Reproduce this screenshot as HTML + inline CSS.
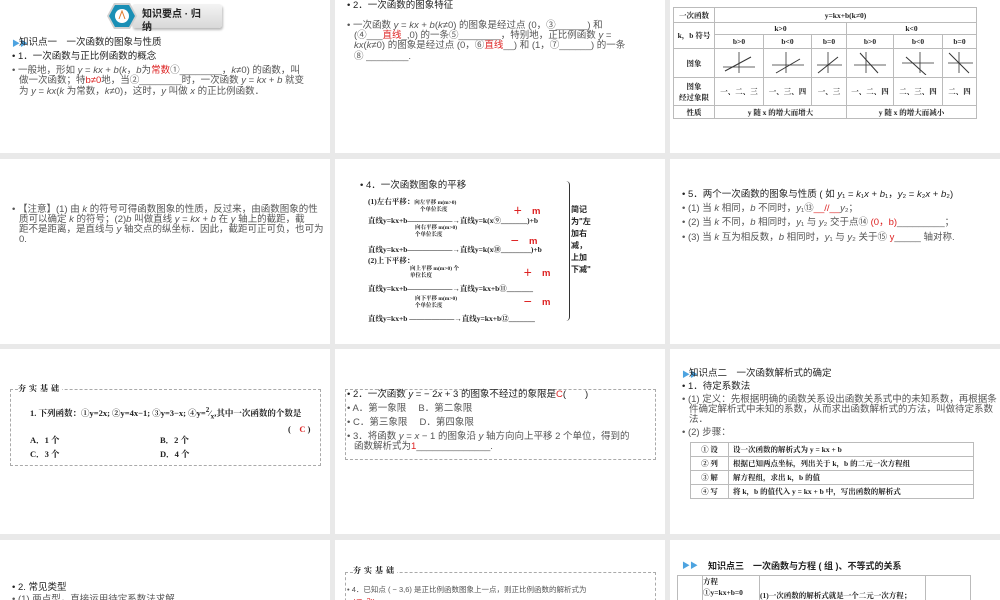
<!DOCTYPE html>
<html><head><meta charset="utf-8"><style>
*{margin:0;padding:0;box-sizing:border-box}
body{width:1000px;height:600px;background:#e9e9e9;position:relative;overflow:hidden;font-family:"Liberation Sans","Noto Sans CJK SC",sans-serif;color:#222}
.s{position:absolute;background:#fff;overflow:hidden;width:330px}
.a{position:absolute;white-space:nowrap;font-size:9.5px;line-height:10px}
.g{color:#555}
.r{color:#d22}
.b{font-weight:bold}
.se{font-family:"Liberation Serif","Noto Serif CJK SC",serif}
.dash{position:absolute;border:1px dashed #aaa}
table{border-collapse:collapse}
td{border:1px solid #bbb;text-align:center;font-family:"Liberation Serif","Noto Serif CJK SC",serif;font-size:7.5px;font-weight:bold;padding:0}
</style></head><body>

<!-- Row 1 -->
<div class="s" style="left:0;top:0;height:153px">
  <div style="position:absolute;left:132px;top:4px;width:90px;height:24px;background:linear-gradient(#f4f4f4,#d8d8d8);border-radius:3px;box-shadow:1px 2px 2px #bbb"></div>
  <svg style="position:absolute;left:106px;top:1px" width="32" height="30"><polygon points="8,2 24,2 31,15 24,28 8,28 1,15" fill="#d0d0d0"/><polygon points="9,4 23,4 29,15 23,26 9,26 3,15" fill="#1a8fb5"/><circle cx="16" cy="15" r="7" fill="#fff"/><path d="M13 18 L16 10 L19 18" stroke="#e07a2b" fill="none"/></svg>
  <div class="a b" style="left:142px;top:9px;font-size:10px;line-height:12px">知识要点 · 归</div>
  <div class="a b" style="left:142px;top:22px;font-size:10px;line-height:12px">纳</div>
  <div class="a" style="left:12px;top:39px;color:#4da3e0;font-size:8px">▶▶</div>
  <div class="a" style="left:19px;top:38px">知识点一　一次函数的图象与性质</div>
  <div class="a" style="left:12px;top:52px">• 1．一次函数与正比例函数的概念</div>
  <div class="a g" style="left:12px;top:66px">• 一般地，形如 <i>y</i> = <i>kx</i> + <i>b</i>(<i>k</i>，<i>b</i>为<span class="r">常数</span>①________，<i>k</i>≠0) 的函数，叫</div>
  <div class="a g" style="left:19px;top:76px">做一次函数；特<span class="r">b≠0</span>地，当②________时，一次函数 <i>y</i> = <i>kx</i> + <i>b</i> 就变</div>
  <div class="a g" style="left:19px;top:87px">为 <i>y</i> = <i>kx</i>(<i>k</i> 为常数，<i>k</i>≠0)，这时，<i>y</i> 叫做 <i>x</i> 的正比例函数．</div>
</div>

<div class="s" style="left:335px;top:0;height:153px">
  <div class="a" style="left:12px;top:1px">• 2．一次函数的图象特征</div>
  <div class="a g" style="left:12px;top:21px">• 一次函数 <i>y</i> = <i>kx</i> + <i>b</i>(<i>k</i>≠0) 的图象是经过点 (0，③______) 和</div>
  <div class="a g" style="left:19px;top:31px">(④___<span class="r">直线</span>_,0) 的一条⑤________，特别地，正比例函数 <i>y</i> =</div>
  <div class="a g" style="left:19px;top:41px"><i>kx</i>(<i>k</i>≠0) 的图象是经过点 (0，⑥<span class="r">直线</span>__) 和 (1，⑦______) 的一条</div>
  <div class="a g" style="left:19px;top:52px">⑧ ________.</div>
</div>

<div class="s" style="left:670px;top:0;height:153px">
  <table style="position:absolute;left:3px;top:7px;width:304px">
    <tr style="height:15px"><td style="width:41px">一次函数</td><td colspan="6">y=kx+b(k≠0)</td></tr>
    <tr style="height:12px"><td rowspan="2">k，b 符号</td><td colspan="3">k&gt;0</td><td colspan="3">k&lt;0</td></tr>
    <tr style="height:14px"><td style="width:49px">b&gt;0</td><td style="width:48px">b&lt;0</td><td style="width:35px">b=0</td><td style="width:47px">b&gt;0</td><td style="width:49px">b&lt;0</td><td>b=0</td></tr>
    <tr style="height:29px"><td>图象</td>
      <td><svg width="40" height="26"><path d="M4 18H36M20 24V3" stroke="#333" stroke-width="0.8"/><path d="M6 22L32 8" stroke="#333"/></svg></td>
      <td><svg width="40" height="26"><path d="M4 16H36M18 24V3" stroke="#333" stroke-width="0.8"/><path d="M8 24L32 10" stroke="#333"/></svg></td>
      <td><svg width="30" height="26"><path d="M3 16H28M14 24V3" stroke="#333" stroke-width="0.8"/><path d="M4 24L24 8" stroke="#333"/></svg></td>
      <td><svg width="40" height="26"><path d="M4 16H36M16 24V3" stroke="#333" stroke-width="0.8"/><path d="M10 4L28 24" stroke="#333"/></svg></td>
      <td><svg width="40" height="26"><path d="M4 14H36M22 24V3" stroke="#333" stroke-width="0.8"/><path d="M8 8L28 26" stroke="#333"/></svg></td>
      <td><svg width="30" height="26"><path d="M3 14H28M14 24V3" stroke="#333" stroke-width="0.8"/><path d="M4 4L24 24" stroke="#333"/></svg></td></tr>
    <tr style="height:28px"><td>图象<br>经过象限</td><td>一、二、三</td><td>一、三、四</td><td>一、三</td><td>一、二、四</td><td>二、三、四</td><td>二、四</td></tr>
    <tr style="height:13px"><td>性质</td><td colspan="3">y 随 x 的增大而增大</td><td colspan="3">y 随 x 的增大而减小</td></tr>
  </table>
</div>

<!-- Row 2 -->
<div class="s" style="left:0;top:159px;height:185px">
  <div class="a g" style="left:12px;top:46px">• 【注意】(1) 由 <i>k</i> 的符号可得函数图象的性质，反过来，由函数图象的性</div>
  <div class="a g" style="left:19px;top:56px">质可以确定 <i>k</i> 的符号；(2)<i>b</i> 叫做直线 <i>y</i> = <i>kx</i> + <i>b</i> 在 <i>y</i> 轴上的截距，截</div>
  <div class="a g" style="left:19px;top:66px">距不是距离，是直线与 <i>y</i> 轴交点的纵坐标．因此，截距可正可负，也可为</div>
  <div class="a g" style="left:19px;top:76px">0.</div>
</div>

<div class="s" style="left:335px;top:159px;height:185px">
  <div class="a" style="left:25px;top:22px">• 4．一次函数图象的平移</div>
  <div class="a b se" style="left:33px;top:38px;font-size:7.5px">(1)左右平移：<span style="font-size:5.5px">向左平移 m(m&gt;0)</span></div>
  <div class="a b se" style="left:85px;top:46px;font-size:5.5px">个单位长度</div>
  <div class="a r b" style="left:178px;top:48px">＋　m</div>
  <div class="a b se" style="left:33px;top:57px;font-size:7.5px">直线y=kx+b――――――→直线y=k(x⑨_______)+b</div>
  <div class="a b se" style="left:80px;top:66px;font-size:5.5px;line-height:7px">向右平移 m(m&gt;0)<br>个单位长度</div>
  <div class="a r b" style="left:175px;top:78px">－　m</div>
  <div class="a b se" style="left:33px;top:86px;font-size:7.5px">直线y=kx+b――――――→直线y=k(x⑩________)+b</div>
  <div class="a b se" style="left:33px;top:97px;font-size:7.5px">(2)上下平移：</div>
  <div class="a b se" style="left:75px;top:107px;font-size:5.5px;line-height:7px">向上平移 m(m&gt;0) 个<br>单位长度</div>
  <div class="a r b" style="left:188px;top:110px">＋　m</div>
  <div class="a b se" style="left:33px;top:125px;font-size:7.5px">直线y=kx+b――――――→直线y=kx+b⑪_______</div>
  <div class="a b se" style="left:80px;top:137px;font-size:5.5px;line-height:7px">向下平移 m(m&gt;0)<br>个单位长度</div>
  <div class="a r b" style="left:188px;top:139px">－　m</div>
  <div class="a b se" style="left:33px;top:155px;font-size:7.5px">直线y=kx+b ――――――→直线y=kx+b⑫_______</div>
  <div style="position:absolute;left:230px;top:22px;width:5px;height:140px;border-right:1px solid #333;border-radius:0 4px 4px 0"></div>
  <div class="a b" style="left:236px;top:45px;font-size:8px;line-height:12px;white-space:normal;width:20px">简记为"左加右减，上加下减"</div>
</div>

<div class="s" style="left:670px;top:159px;height:185px">
  <div class="a" style="left:12px;top:31px">• 5．两个一次函数的图象与性质 ( 如 <i>y</i>₁ = <i>k</i>₁<i>x</i> + <i>b</i>₁，<i>y</i>₂ = <i>k</i>₂<i>x</i> + <i>b</i>₂)</div>
  <div class="a g" style="left:12px;top:45px">• (1) 当 <i>k</i> 相同，<i>b</i> 不同时，<i>y</i>₁⑬<span class="r">__//__</span><i>y</i>₂；</div>
  <div class="a g" style="left:12px;top:59px">• (2) 当 <i>k</i> 不同，<i>b</i> 相同时，<i>y</i>₁ 与 <i>y</i>₂ 交于点⑭ <span class="r">(0，b)</span>_________；</div>
  <div class="a g" style="left:12px;top:74px">• (3) 当 <i>k</i> 互为相反数，<i>b</i> 相同时，<i>y</i>₁ 与 <i>y</i>₂ 关于⑮ <span class="r">y</span>_____ 轴对称.</div>
</div>

<!-- Row 3 -->
<div class="s" style="left:0;top:349px;height:185px">
  <div class="dash" style="left:10px;top:40px;width:311px;height:77px"></div>
  <div class="a b se" style="left:18px;top:35px;background:#fff;font-size:8px;letter-spacing:3px">夯实基础</div>
  <div class="a b se" style="left:30px;top:56px;font-size:8.5px">1. 下列函数：①y=2x; ②y=4x−1; ③y=3−x; ④y=<sup>2</sup>⁄<sub>x</sub>,其中一次函数的个数是</div>
  <div class="a b se" style="left:288px;top:75px;font-size:8.5px">(　<span class="r">C</span> )</div>
  <div class="a b se" style="left:30px;top:86px;font-size:8.5px">A．1 个</div><div class="a b se" style="left:160px;top:86px;font-size:8.5px">B．2 个</div>
  <div class="a b se" style="left:30px;top:100px;font-size:8.5px">C．3 个</div><div class="a b se" style="left:160px;top:100px;font-size:8.5px">D．4 个</div>
</div>

<div class="s" style="left:335px;top:349px;height:185px">
  <div class="dash" style="left:10px;top:40px;width:311px;height:71px"></div>
  <div class="a" style="left:12px;top:41px">• 2．一次函数 <i>y</i> = − 2<i>x</i> + 3 的图象不经过的象限是<span class="r">C</span>(　　)</div>
  <div class="a g" style="left:12px;top:55px">• A．第一象限　 B．第二象限</div>
  <div class="a g" style="left:12px;top:69px">• C．第三象限　 D．第四象限</div>
  <div class="a g" style="left:12px;top:83px">• 3．将函数 <i>y</i> = <i>x</i> − 1 的图象沿 <i>y</i> 轴方向向上平移 2 个单位，得到的</div>
  <div class="a g" style="left:19px;top:93px">函数解析式为<span class="r">1</span>______________.</div>
</div>

<div class="s" style="left:670px;top:349px;height:185px">
  <div class="a" style="left:12px;top:21px;color:#4da3e0;font-size:8px">▶▶</div>
  <div class="a" style="left:19px;top:20px">知识点二　一次函数解析式的确定</div>
  <div class="a" style="left:12px;top:33px">• 1．待定系数法</div>
  <div class="a g" style="left:12px;top:46px">• (1) 定义：先根据明确的函数关系设出函数关系式中的未知系数，再根据条</div>
  <div class="a g" style="left:19px;top:56px">件确定解析式中未知的系数，从而求出函数解析式的方法，叫做待定系数</div>
  <div class="a g" style="left:19px;top:66px">法．</div>
  <div class="a g" style="left:12px;top:79px">• (2) 步骤：</div>
  <table style="position:absolute;left:20px;top:93px;width:284px">
    <tr style="height:14px"><td style="width:38px">① 设</td><td style="text-align:left;padding-left:4px">设一次函数的解析式为 y = kx + b</td></tr>
    <tr style="height:14px"><td>② 列</td><td style="text-align:left;padding-left:4px">根据已知两点坐标，列出关于 k，b 的二元一次方程组</td></tr>
    <tr style="height:14px"><td>③ 解</td><td style="text-align:left;padding-left:4px">解方程组，求出 k，b 的值</td></tr>
    <tr style="height:14px"><td>④ 写</td><td style="text-align:left;padding-left:4px">将 k，b 的值代入 y = kx + b 中，写出函数的解析式</td></tr>
  </table>
</div>

<!-- Row 4 -->
<div class="s" style="left:0;top:540px;height:60px">
  <div class="a" style="left:12px;top:43px">• 2. 常见类型</div>
  <div class="a g" style="left:12px;top:55px">• (1) 两点型，直接运用待定系数法求解．</div>
</div>
<div class="s" style="left:335px;top:540px;height:60px">
  <div class="dash" style="left:10px;top:32px;width:311px;height:40px"></div>
  <div class="a b se" style="left:18px;top:26px;background:#fff;letter-spacing:3px;font-size:8px">夯实基础</div>
  <div class="a g" style="left:12px;top:45px;font-size:7.5px">• 4．已知点 ( − 3,6) 是正比例函数图象上一点，则正比例函数的解析式为</div>
  <div class="a r" style="left:19px;top:56px;font-size:7.5px">y=−2x</div>
</div>
<div class="s" style="left:670px;top:540px;height:60px">
  <div class="a" style="left:12px;top:21px;color:#4da3e0;font-size:8px">▶▶</div>
  <div class="a b" style="left:38px;top:21px;font-size:9px">知识点三　一次函数与方程 ( 组 )、不等式的关系</div>
  <table style="position:absolute;left:7px;top:35px;width:294px">
    <tr style="height:40px"><td style="width:25px"></td><td style="width:57px;text-align:left;vertical-align:top">方程<br>①y=kx+b=0</td><td style="width:166px;text-align:left">(1)一次函数的解析式就是一个二元一次方程；</td><td></td></tr>
  </table>
</div>
</body></html>
